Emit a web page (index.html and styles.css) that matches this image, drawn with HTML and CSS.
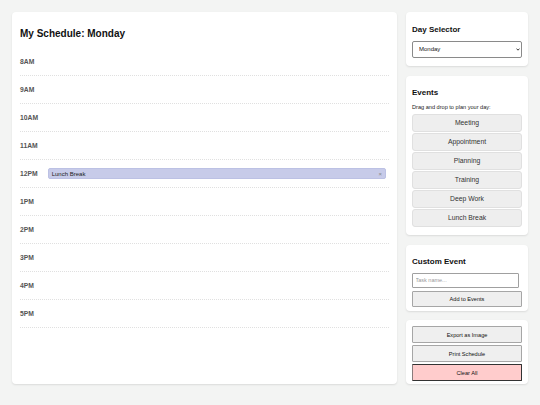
FILE: index.html
```html
<!DOCTYPE html>
<html lang="en">
<head>
<meta charset="utf-8">
<title>My Schedule</title>
<link rel="stylesheet" href="styles.css">
</head>
<body>
<div class="layout">
  <main class="schedule">
    <h2 class="title">My Schedule: Monday</h2>
    <div class="rows">
      <div class="row"><div class="time">8AM</div><div class="slot"></div></div>
      <div class="row"><div class="time">9AM</div><div class="slot"></div></div>
      <div class="row"><div class="time">10AM</div><div class="slot"></div></div>
      <div class="row"><div class="time">11AM</div><div class="slot"></div></div>
      <div class="row"><div class="time">12PM</div><div class="slot"><div class="event"><span>Lunch Break</span><span class="remove">×</span></div></div></div>
      <div class="row"><div class="time">1PM</div><div class="slot"></div></div>
      <div class="row"><div class="time">2PM</div><div class="slot"></div></div>
      <div class="row"><div class="time">3PM</div><div class="slot"></div></div>
      <div class="row"><div class="time">4PM</div><div class="slot"></div></div>
      <div class="row"><div class="time">5PM</div><div class="slot"></div></div>
    </div>
  </main>
  <aside class="sidebar">
    <section class="card">
      <h3>Day Selector</h3>
      <div class="select-wrap">
        <select class="day-select"><option>Monday</option></select>
        <svg class="chev" width="4" height="3" viewBox="0 0 4 3"><path d="M0.5 0.6 L2 2.2 L3.5 0.6" fill="none" stroke="#222" stroke-width="0.9"/></svg>
      </div>
    </section>
    <section class="card">
      <h3>Events</h3>
      <p class="hint">Drag and drop to plan your day:</p>
      <div class="event-list">
        <div class="evt-btn">Meeting</div>
        <div class="evt-btn">Appointment</div>
        <div class="evt-btn">Planning</div>
        <div class="evt-btn">Training</div>
        <div class="evt-btn">Deep Work</div>
        <div class="evt-btn">Lunch Break</div>
      </div>
    </section>
    <section class="card">
      <h3>Custom Event</h3>
      <input class="task-input" type="text" placeholder="Task name...">
      <button class="btn">Add to Events</button>
    </section>
    <section class="card actions">
      <button class="btn">Export as Image</button>
      <button class="btn">Print Schedule</button>
      <button class="btn danger">Clear All</button>
    </section>
  </aside>
</div>
</body>
</html>
```

FILE: styles.css
```css
html, body {
  margin: 0;
}
body {
  padding: 12px;
  background: #f3f4f3;
  font-family: "Liberation Sans", Arial, Helvetica, sans-serif;
  color: #111;
}
.layout {
  display: grid;
  grid-template-columns: 385px 122px;
  column-gap: 9px;
  align-items: stretch;
}
.schedule {
  background: #fff;
  border-radius: 4px;
  box-shadow: 0 1px 2px rgba(0, 0, 0, 0.1);
  padding: 8px;
}
.title {
  font-size: 10px;
  line-height: 12px;
  margin: 8px 0 8px;
  font-weight: bold;
  color: #111;
}
.row {
  height: 27px;
  border-bottom: 1px dotted #e0e0e0;
  display: flex;
  align-items: center;
}
.time {
  width: 27.7px;
  flex: none;
  font-size: 6.75px;
  font-weight: bold;
  color: #555;
}
.slot {
  flex: 1;
  padding-right: 3px;
}
.event {
  height: 10.7px;
  box-sizing: border-box;
  background: #c7cbe9;
  border: 1px solid #bcc1e4;
  border-radius: 2px;
  display: flex;
  align-items: center;
  justify-content: space-between;
  padding: 0 3px 0 3px;
  font-size: 6px;
  color: #222;
}
.remove {
  color: #888;
  font-size: 6px;
}
.sidebar {
  display: flex;
  flex-direction: column;
  gap: 9.8px;
}
.card {
  background: #fff;
  border-radius: 4px;
  box-shadow: 0 1px 2px rgba(0, 0, 0, 0.1);
  padding: 6px 6px 3.5px;
}
.card h3 {
  font-size: 8px;
  line-height: 10px;
  margin: 6.5px 0 6px;
  font-weight: bold;
  color: #111;
}
.select-wrap {
  position: relative;
  height: 17.5px;
  margin-bottom: 4.5px;
}
.day-select {
  -webkit-appearance: none;
  appearance: none;
  display: block;
  width: 100%;
  height: 17.5px;
  box-sizing: border-box;
  border: 1px solid #8a8a8a;
  border-radius: 2px;
  background: #fff;
  font-family: inherit;
  font-size: 6px;
  color: #111;
  padding: 0 0 0 6px;
  margin: 0;
}
.chev {
  position: absolute;
  right: 2.5px;
  top: 7.5px;
}
.hint {
  font-size: 5.6px;
  line-height: 7px;
  margin: 0 0 2.8px;
  color: #222;
}
.event-list {
  display: flex;
  flex-direction: column;
  gap: 1.5px;
  margin-bottom: 4.7px;
}
.evt-btn {
  height: 17.5px;
  box-sizing: border-box;
  background: #eee;
  border: 1px solid #e0e0e0;
  border-radius: 3px;
  font-size: 6.8px;
  color: #333;
  display: flex;
  align-items: center;
  justify-content: center;
}
.task-input {
  display: block;
  width: 107px;
  height: 14.5px;
  box-sizing: border-box;
  border: 1px solid #a0a0a0;
  border-radius: 1px;
  font-family: inherit;
  font-size: 5.5px;
  padding: 0 2.5px;
  margin: 0 0 3px;
  outline: none;
}
.task-input::placeholder {
  color: #999;
}
.btn {
  display: block;
  width: 100%;
  height: 16.5px;
  box-sizing: border-box;
  background: #efefef;
  border: 1px solid #a6a6a6;
  border-radius: 1px;
  font-family: inherit;
  font-size: 5.6px;
  color: #111;
  padding: 0;
  margin: 0;
}
.actions .btn + .btn {
  margin-top: 2.5px;
}
.btn.danger {
  background: #ffcccc;
  border-color: #333;
  border-left-color: #8a7a7a;
}
```
